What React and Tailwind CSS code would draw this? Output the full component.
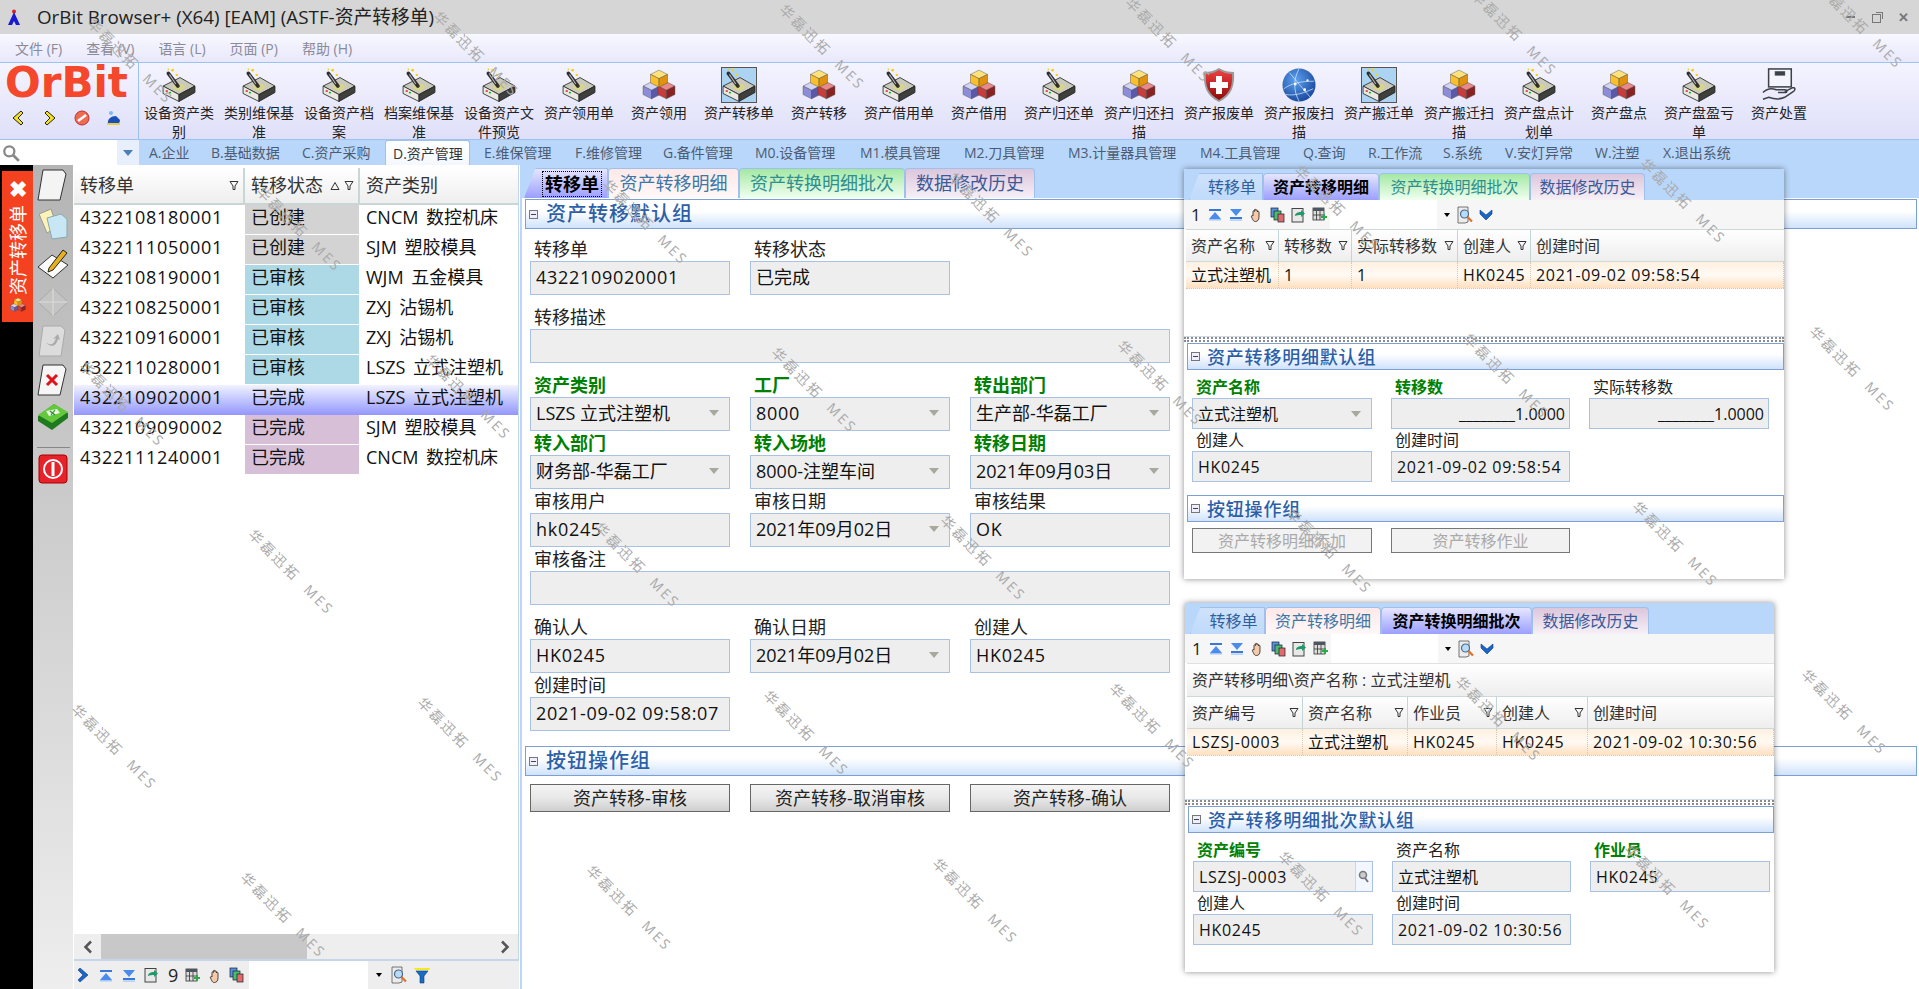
import React from 'react'

const Machine = ({ s = 34 }) => (
  <svg width={s} height={s} viewBox="0 0 32 32">
    <polygon points="1,17 17,9 31,17 16,25" fill="#c9c9bd" stroke="#2c2c2c" strokeWidth=".8" />
    <polygon points="1,17 16,25 16,31.500 1,24" fill="#e9e9e2" stroke="#2c2c2c" strokeWidth=".8" />
    <polygon points="16,25 31,17 31,23 16,31.500" fill="#3f3f3c" stroke="#222" strokeWidth=".8" />
    <ellipse cx="16" cy="18" rx="5.500" ry="3.200" fill="#d8d488" />
    <line x1="15" y1="17" x2="6" y2="5" stroke="#2e2e2e" strokeWidth="3.400" strokeLinecap="round" />
    <line x1="13" y1="15" x2="7" y2="6" stroke="#b8b8b8" strokeWidth="1" />
    <circle cx="10" cy="2" r="1.400" fill="#f4d21f" />
    <circle cx="14" cy="6.500" r="1.200" fill="#f4d21f" />
    <circle cx="6" cy="1.200" r=".8" fill="#e8c820" />
    <rect x="3.500" y="21" width="2" height="1.400" fill="#d22" />
    <rect x="6.500" y="22.500" width="2" height="1.400" fill="#2a2" />
  </svg>
)

const Cube = ({ x, y, r, top, left, right }) => (
  <g stroke="#444" strokeWidth=".4">
    <polygon points={`${x},${y - r} ${x + r},${y - r / 2} ${x},${y} ${x - r},${y - r / 2}`} fill={top} />
    <polygon points={`${x - r},${y - r / 2} ${x},${y} ${x},${y + r} ${x - r},${y + r / 2}`} fill={left} />
    <polygon points={`${x + r},${y - r / 2} ${x},${y} ${x},${y + r} ${x + r},${y + r / 2}`} fill={right} />
  </g>
)

const Cubes = ({ s = 34 }) => (
  <svg width={s} height={s} viewBox="0 0 32 32">
    <Cube x={9} y={21} r={8} top="#d4d4f4" left="#8c8cd8" right="#5a5aa8" />
    <Cube x={23} y={21} r={8} top="#e88a8a" left="#c83c3c" right="#8a2222" />
    <Cube x={16} y={10} r={8} top="#ffe27a" left="#fbc02a" right="#e2930e" />
  </svg>
)

const Shield = () => (
  <svg width="34" height="36" viewBox="0 0 34 36">
    <defs>
      <linearGradient id="shieldRed" x1="0" y1="0" x2="0" y2="1">
        <stop offset="0" stopColor="#f04040" />
        <stop offset="1" stopColor="#8c0a0a" />
      </linearGradient>
    </defs>
    <path d="M17 1 C22 4 27 5 32 5 C33 18 30 29 17 35 C4 29 1 18 2 5 C7 5 12 4 17 1Z" fill="#9a9a9a" />
    <path d="M17 3 C22 6 26 7 30 7 C31 18 28 27 17 33 C6 27 3 18 4 7 C8 7 12 6 17 3Z" fill="url(#shieldRed)" />
    <path d="M14 9h6v6h6v6h-6v6h-6v-6H8v-6h6z" fill="#fff" />
  </svg>
)

const Globe = () => (
  <svg width="36" height="36" viewBox="0 0 36 36">
    <defs>
      <radialGradient id="globeBlue" cx=".4" cy=".35" r=".75">
        <stop offset="0" stopColor="#5ea2ee" />
        <stop offset="1" stopColor="#123f96" />
      </radialGradient>
    </defs>
    <circle cx="18" cy="18" r="17.500" fill="url(#globeBlue)" />
    <g fill="none" stroke="#cfe4ff" strokeWidth=".8">
      <path d="M2 22 C10 16 20 14 34 14" />
      <path d="M8 5 C14 12 22 22 30 31" />
      <path d="M18 1 C12 12 12 24 18 35" />
      <path d="M4 28 C14 30 24 26 33 22" />
    </g>
    <circle cx="14" cy="17" r="1.500" fill="#fff" />
    <circle cx="24" cy="23" r="1.500" fill="#fff" />
    <circle cx="27" cy="13" r="1.200" fill="#fff" />
  </svg>
)

const HandBox = () => (
  <svg width="36" height="36" viewBox="0 0 36 36" fill="none" stroke="#3c4248">
    <rect x="7" y="1" width="24" height="19" strokeWidth="1.600" fill="#f4f4fc" />
    <rect x="14" y="4" width="10" height="3.500" fill="#3c4248" />
    <path d="M1 26 C5 22 10 21 15 23 L24 23 C27 23 27 26 24 26 L17 26" strokeWidth="1.600" />
    <path d="M24 25 L32 21 C35 20 36 23 33 25 L24 31 C20 33 13 33 7 31 L1 33" strokeWidth="1.600" />
  </svg>
)

const bigIcons = { m: <Machine />, c: <Cubes />, s: <Shield />, g: <Globe />, h: <HandBox /> }

const toolItems = [
  ['设备资产类别', 'm'], ['类别维保基准', 'm'], ['设备资产档案', 'm'], ['档案维保基准', 'm'],
  ['设备资产文件预览', 'm'], ['资产领用单', 'm'], ['资产领用', 'c'], ['资产转移单', 'm', true],
  ['资产转移', 'c'], ['资产借用单', 'm'], ['资产借用', 'c'], ['资产归还单', 'm'],
  ['资产归还扫描', 'c'], ['资产报废单', 's'], ['资产报废扫描', 'g'], ['资产搬迁单', 'm', true],
  ['资产搬迁扫描', 'c'], ['资产盘点计划单', 'm'], ['资产盘点', 'c'], ['资产盘盈亏单', 'm'], ['资产处置', 'h'],
]

// width = distance from this label's start to the next one
const navTabs = [
  ['A.企业', 62], ['B.基础数据', 91], ['C.资产采购', 90], ['D.资产管理', 92, true], ['E.维保管理', 91],
  ['F.维修管理', 88], ['G.备件管理', 92], ['M0.设备管理', 105], ['M1.模具管理', 104], ['M2.刀具管理', 104],
  ['M3.计量器具管理', 132], ['M4.工具管理', 103], ['Q.查询', 65], ['R.工作流', 75], ['S.系统', 62],
  ['V.安灯异常', 90], ['W.注塑', 68], ['X.退出系统', 90],
]

const rows = [
  ['4322108180001', '已创建', 'bg-[#d3d3d3]', 'CNCM 数控机床'],
  ['4322111050001', '已创建', 'bg-[#d3d3d3]', 'SJM 塑胶模具'],
  ['4322108190001', '已审核', 'bg-[#add8e6]', 'WJM 五金模具'],
  ['4322108250001', '已审核', 'bg-[#add8e6]', 'ZXJ 沾锡机'],
  ['4322109160001', '已审核', 'bg-[#add8e6]', 'ZXJ 沾锡机'],
  ['4322110280001', '已审核', 'bg-[#add8e6]', 'LSZS 立式注塑机'],
  ['4322109020001', '已完成', '', 'LSZS 立式注塑机', true],
  ['4322109090002', '已完成', 'bg-[#d8bfd8]', 'SJM 塑胶模具'],
  ['4322111240001', '已完成', 'bg-[#d8bfd8]', 'CNCM 数控机床'],
]

const Funnel = () => (
  <svg width="10" height="11" viewBox="0 0 10 11" fill="none" stroke="#333" className="shrink-0">
    <path d="M1 1.500h8L6 6v3.500H4V6z" strokeWidth="1" />
  </svg>
)

const SortUp = () => (
  <svg width="10" height="10" viewBox="0 0 10 10" fill="none" stroke="#333" className="shrink-0">
    <path d="M5 1.500L9 8.500H1z" strokeWidth="1" />
  </svg>
)

const BarUp = () => (
  <svg width="14" height="13" viewBox="0 0 14 13">
    <rect x="1" y="1" width="12" height="2" fill="#3a78d8" />
    <path d="M7 4l6 7H1z" fill="#4a8cec" />
    <rect x="1" y="11" width="12" height="1.500" fill="#a6c8f4" />
  </svg>
)

const BarDown = () => (
  <svg width="14" height="13" viewBox="0 0 14 13">
    <path d="M1 1h12L7 8z" fill="#4a8cec" />
    <rect x="1" y="9" width="12" height="2" fill="#3a78d8" />
    <rect x="1" y="11.500" width="12" height="1.200" fill="#a6c8f4" />
  </svg>
)

const Hand = () => (
  <svg width="13" height="15" viewBox="0 0 13 15">
    <path d="M3 8V4.500c0-1 1.400-1 1.400 0V3c0-1 1.500-1 1.500 0v.6c0-1 1.500-1 1.500 0V5c0-1 1.600-1 1.600 0v5c0 3-1.600 4.500-3.600 4.500S3.200 13.500 1.500 10c-.6-1.200.7-2 1.500-1z" fill="#f6c9a8" stroke="#222" strokeWidth=".8" />
  </svg>
)

const Copies = () => (
  <svg width="15" height="16" viewBox="0 0 15 16">
    <rect x="1" y="1" width="7" height="9" fill="#5a90e0" stroke="#123" strokeWidth=".7" />
    <rect x="4" y="4" width="7" height="9" fill="#4dbb6a" stroke="#123" strokeWidth=".7" />
    <rect x="8" y="7" width="6" height="8" fill="#e46a6a" stroke="#123" strokeWidth=".7" />
  </svg>
)

const Export = () => (
  <svg width="16" height="16" viewBox="0 0 16 16">
    <rect x="1" y="1.500" width="11" height="13.500" fill="#e8e8e8" stroke="#444" strokeWidth="1" />
    <path d="M4 9c0-3 3-4 6-4V3l4 3.500-4 3.500V8c-2 0-4 0-6 1z" fill="#1f9a6a" />
  </svg>
)

const Columns = () => (
  <svg width="16" height="15" viewBox="0 0 16 15">
    <rect x="1" y="1" width="11" height="12" fill="#ddd" stroke="#333" strokeWidth=".8" />
    <rect x="1" y="1" width="11" height="3" fill="#4d5560" />
    <path d="M4.500 4v9M8 4v9M1 8h11" stroke="#333" strokeWidth=".8" />
    <path d="M12 7v6M9 10h6" stroke="#2da84a" strokeWidth="2" />
  </svg>
)

const Magnifier = () => (
  <svg width="17" height="18" viewBox="0 0 17 18">
    <path d="M1 1h10v15l-3 1H1z" fill="#ececec" stroke="#555" strokeWidth=".8" />
    <circle cx="7.500" cy="8" r="4" fill="#b8dcf8" stroke="#4a6a8a" strokeWidth="1.200" />
    <path d="M10.500 11l4.500 4.500" stroke="#e0702a" strokeWidth="2.200" />
  </svg>
)

const Chevrons = () => (
  <svg width="14" height="14" viewBox="0 0 14 14">
    <path d="M1 2l6 5 6-5v4l-6 6-6-6z" fill="#1a66c8" stroke="#0c3c80" strokeWidth=".6" />
  </svg>
)

const ComboArrow = () => (
  <span className="ml-auto mr-[10px] size-0 border-x-[5px] border-t-[6px] border-x-transparent border-t-[#a8a89c]" />
)

const DropArrow = () => (
  <span className="size-0 border-x-[3px] border-t-[4px] border-x-transparent border-t-black" />
)

const MiniBar = ({ count }) => (
  <div className="h-[29px] bg-[#f6f6f6] flex items-center shrink-0">
    <span className="ml-[7px] w-[13px] text-[17px]">{count}</span>
    <div className="flex items-center">
      {[<BarUp key="a" />, <BarDown key="b" />, <Hand key="c" />, <Copies key="d" />, <Export key="e" />, <Columns key="f" />].map((icon, i) => (
        <span key={i} className="w-[21px] flex justify-center">{icon}</span>
      ))}
    </div>
    <div className="w-[107px] h-full bg-white" />
    <div className="w-[20px] flex justify-center"><DropArrow /></div>
    <Magnifier />
    <span className="ml-[5px]"><Chevrons /></span>
  </div>
)

// latin values run wider in the picture than the cjk ones
const valueCls = v => (/[\u4e00-\u9fff]/.test(v) ? '' : 'tracking-[0.7px]')

const Field = ({ label, req, value, combo, lookup, small, right, className }) => (
  <div className={className}>
    <div className={small
      ? `h-[22px] leading-[22px] pl-[4px] text-[16px] ${req ? 'font-bold text-[#008000]' : 'text-[#222]'}`
      : `h-[24px] leading-[24px] pl-[4px] text-[18px] ${req ? 'font-bold text-[#008000]' : 'text-[#222]'}`}>{label}</div>
    <div className={`${small ? 'h-[31px] text-[16px]' : 'h-[34px] pb-[2px] text-[18px]'} bg-[#eeeeee] border border-[#a9c1e2] flex items-center pl-[5px] text-[#111] whitespace-nowrap overflow-hidden`}>
      {right ? <span className="ml-auto pr-[4px]">{value}</span> : <span className={valueCls(value)}>{value}</span>}
      {combo && <ComboArrow />}
      {lookup && (
        <span className="ml-auto w-[17px] h-full bg-[#f2f7ff] border-l border-[#c6d8ee] flex items-center justify-center">
          <svg width="12" height="14" viewBox="0 0 12 14" fill="none">
            <circle cx="5" cy="5" r="3.500" stroke="#777" strokeWidth="1.500" fill="#ccc" />
            <path d="M7 8l3 4" stroke="#777" strokeWidth="2" />
          </svg>
        </span>
      )}
    </div>
  </div>
)

const GroupHeader = ({ title, small }) => (
  <div className={`${small ? 'h-[27px] text-[18px] pl-[3px] ml-[3px] gap-[7px] tracking-[0.8px]' : 'h-[30px] text-[20px] pl-[3px] gap-[8px] tracking-[1px]'} border border-[#7c9fd6] bg-gradient-to-b from-white from-40% to-[#cfe2fb] flex items-center text-[#2c5fa8] font-medium shrink-0`}>
    <span className="w-[9px] h-[9px] border border-[#777] flex items-center justify-center bg-[#eef]">
      <span className="w-[5px] h-px bg-[#444]" />
    </span>
    <span className="leading-none">{title}</span>
  </div>
)

const tabStyles = [
  { idle: 'from-[#cfe2fb] to-[#bfdafb] text-[#2f5f9f]', name: '转移单', first: true },
  { idle: 'from-[#ffe8e8] to-[#fff8f8] text-[#3a78a8]', name: '资产转移明细' },
  { idle: 'from-[#a4e8a4] to-[#f0fff0] text-[#2f8f8f]', name: '资产转换明细批次' },
  { idle: 'from-[#dcc6dc] to-[#f6f0f6] text-[#3a5a9a]', name: '数据修改历史' },
]

const Tabs = ({ active, widths, small }) => (
  <div className={`${small ? 'h-[31px] pl-[5px] text-[16px]' : 'h-[33px] pl-[2px] pt-[3px] text-[18px]'} bg-[#b9d7fb] flex items-end shrink-0`}>
    {tabStyles.map((t, i) => (
      <div
        key={t.name}
        style={{ width: widths[i] }}
        className={`${small ? 'h-[27px]' : 'h-[30px]'} ${t.first ? '[clip-path:polygon(14%_0,100%_0,100%_100%,0_100%)] pl-[12px]' : 'rounded-t-[4px]'} border border-b-0 border-[#9fc0ea] flex items-center justify-center shrink-0 bg-gradient-to-b ${i === active ? 'from-[#e6e6ff] to-[#9c9eff] text-black font-bold' : t.idle}`}
      >
        <span className={i === active && !small ? 'border border-dotted border-black px-[2px] leading-[24px]' : ''}>{t.name}</span>
      </div>
    ))}
  </div>
)

const FloatHead = ({ cols }) => (
  <div className="h-[33px] flex bg-gradient-to-b from-white to-[#eeeeee] border-y border-[#cdd9d9] shrink-0 ml-[2px]">
    {cols.map(([name, w, noFilter]) => (
      <div key={name} style={{ width: w }} className={`flex items-center pl-[5px] pr-[3px] border-r border-[#c5d5d5] text-[16px] text-[#333] ${noFilter ? 'flex-1 border-r-0' : 'shrink-0'}`}>
        <span className="whitespace-nowrap">{name}</span>
        {!noFilter && <span className="ml-auto"><Funnel /></span>}
      </div>
    ))}
  </div>
)

const FloatRow = ({ cols }) => (
  <div className="h-[27px] flex bg-gradient-to-b from-[#fff0e0] via-[#fffaf4] to-[#ffdfbe] border-b border-dotted border-[#d8c8b0] shrink-0 ml-[2px]">
    {cols.map(([text, w], i) => (
      <div key={i} style={{ width: w }} className={`flex items-center pl-[5px] text-[16px] text-[#111] whitespace-nowrap border-r border-dotted border-[#d8c8b0] shrink-0 ${valueCls(text)}`}>{text}</div>
    ))}
  </div>
)

const Splitter = () => (
  <div className="h-[5px] shrink-0 border-y-2 border-dotted border-[#8a8a8a] mb-[1px]" />
)

// watermark grid, read off the picture
const marks = []
for (let i = -2; i < 8; i++) {
  for (let j = -3; j < 7; j++) {
    const x = 79 + i * 346 + j * 177
    const y = 702 - i * 7 - j * 175
    if (x > -130 && x < 1919 && y > -110 && y < 989) marks.push([x, y])
  }
}

const stripIcons = [
  <svg key="a" width="32" height="32" viewBox="0 0 32 32"><path d="M6 1h20l3 4-6 26H1z" fill="#f4f4f4" stroke="#333" /></svg>,
  <svg key="b" width="32" height="32" viewBox="0 0 32 32"><path d="M2 6l12-5 6 18-10 6z" fill="#fbf2b8" stroke="#999" /><path d="M10 10l14-4 6 5v18l-15 2z" fill="#c8e6f4" stroke="#8aa" /></svg>,
  <svg key="c" width="32" height="32" viewBox="0 0 32 32"><path d="M1 20L15 8l16 10-15 13z" fill="#fbfbfb" stroke="#333" /><path d="M12 21L26 3l4 3-14 17-5 2z" fill="#e9b01e" stroke="#222" /></svg>,
  <svg key="d" width="32" height="32" viewBox="0 0 32 32"><path d="M1 16L16 2l15 14-15 14z" fill="#c4c4c4" stroke="#aaa" /><path d="M16 2v28M1 16h30" stroke="#ddd" /></svg>,
  <svg key="e" width="32" height="32" viewBox="0 0 32 32"><path d="M6 1h18l4 4-4 26H2z" fill="#dcdcdc" stroke="#aaa" /><path d="M9 17c4 4 8 3 10-4l-3 1 5-5 2 6-2-1c-2 8-8 9-12 3z" fill="#aaa" /></svg>,
  <svg key="f" width="32" height="32" viewBox="0 0 32 32"><path d="M6 1h20l3 4-6 26H1z" fill="#f6f6f6" stroke="#333" /><path d="M10 11l10 10M20 11L10 21" stroke="#e0151b" strokeWidth="3" /></svg>,
  <svg key="g" width="32" height="28" viewBox="0 0 32 28"><path d="M1 13L17 1l14 9v5L15 27 1 18z" fill="#1f7a1f" /><path d="M1 12L17 1l14 8-16 11z" fill="#63c83c" /><path d="M9 8l11-2 3 4-11 3z" fill="#e6f6e0" /><path d="M13 8l5 4M18 7l-4 5" stroke="#2a8a2a" strokeWidth="1.200" /></svg>,
]

export default function App() {
  return (
    <div className="relative w-[1919px] h-[989px] overflow-hidden bg-white flex flex-col text-[#222] font-['Open_Sans','Noto_Sans_CJK_SC',sans-serif]">
      {/* title bar */}
      <div className="h-[34px] bg-[#d6d6d6] flex items-center shrink-0 pl-[7px]">
        <svg width="14" height="17" viewBox="0 0 14 17">
          <circle cx="7" cy="2.500" r="2" fill="#e02020" />
          <path d="M7 3L13 16H9L7 12 5 16H1z" fill="#1a1ad0" />
        </svg>
        <span className="ml-[16px] text-[18.8px] text-[#222] whitespace-nowrap">OrBit Browser+ (X64) [EAM] (ASTF-资产转移单)</span>
        <div className="ml-auto flex items-center gap-[17px] pr-[10px] text-[#777]">
          <span className="w-[9px] h-[2px] bg-[#777]" />
          <span className="relative w-[9px] h-[9px] border border-[#777] mt-[2px]">
            <span className="absolute -top-[3px] -right-[3px] w-[7px] h-[7px] border-t border-r border-[#777]" />
          </span>
          <span className="text-[13px] font-bold leading-none">✕</span>
        </div>
      </div>

      {/* menu */}
      <div className="h-[28px] bg-gradient-to-b from-[#f8f8ff] to-[#e8e8fb] flex items-center gap-[24px] pl-[15px] text-[14px] text-[#8a8a9a] shrink-0">
        <span>文件 (F)</span>
        <span>查看 (V)</span>
        <span>语言 (L)</span>
        <span>页面 (P)</span>
        <span>帮助 (H)</span>
      </div>

      {/* toolbar */}
      <div className="h-[78px] border-y border-[#9ec2ee] bg-gradient-to-b from-[#f4f4ff] to-[#dfdff9] flex shrink-0">
        <div className="w-[139px] border-r border-[#9ec2ee] shrink-0">
          <div className="h-[40px] pl-[5px] pt-[1px] text-[42px] leading-[38px] font-bold text-[#f4472b] font-['DejaVu_Sans',sans-serif]">OrBit</div>
          <div className="flex items-center gap-[16px] pl-[10px] pt-[7px]">
            <svg width="16" height="16" viewBox="0 0 16 16"><path d="M11 1L3 8l8 7 2-2-5-5 5-5z" fill="#f6e21a" stroke="#222" /></svg>
            <svg width="16" height="16" viewBox="0 0 16 16"><path d="M5 1l8 7-8 7-2-2 5-5-5-5z" fill="#f6e21a" stroke="#222" /></svg>
            <svg width="16" height="16" viewBox="0 0 16 16"><circle cx="8" cy="8" r="7" fill="#ee6a50" stroke="#b33" /><path d="M4 11l8-6" stroke="#fff" strokeWidth="2.500" /></svg>
            <svg width="16" height="16" viewBox="0 0 16 16"><path d="M2 14c-1-5 3-8 8-8l4 4c0 3-2 4-4 4z" fill="#1b4fb8" /><rect x="1" y="13" width="13" height="2" fill="#e8d040" /><circle cx="5" cy="3" r="2" fill="#7bbcf0" /></svg>
          </div>
        </div>
        {toolItems.map(([label, icon, sel]) => (
          <div key={label} className="w-[80px] shrink-0 flex flex-col items-center pt-[4px]">
            <div className={`size-[36px] flex items-center justify-center border ${sel ? 'bg-[#acd3f1] border-[#555]' : 'border-transparent'}`}>
              {bigIcons[icon]}
            </div>
            <div className="w-[72px] text-center text-[14px] leading-[19px] text-[#222]">{label}</div>
          </div>
        ))}
      </div>

      {/* module tabs */}
      <div className="h-[25px] bg-[#b9d7fb] flex items-stretch shrink-0 text-[14px] text-[#4d5c72]">
        <div className="w-[117px] bg-white flex items-center pl-[2px] shrink-0">
          <svg width="18" height="18" viewBox="0 0 16 16" fill="none">
            <circle cx="6.500" cy="6.500" r="4.500" stroke="#888" strokeWidth="2" />
            <path d="M10 10l5 5" stroke="#888" strokeWidth="2.500" />
          </svg>
        </div>
        <div className="w-[22px] bg-[#e6effb] flex items-center justify-center shrink-0">
          <span className="size-0 border-x-[5px] border-t-[6px] border-x-transparent border-t-[#4d7db8]" />
        </div>
        <div className="flex pl-[10px]">
          {navTabs.map(([label, w, on]) => (
            on ? (
              <div key={label} className="-ml-[7px] mr-[14px] w-[85px] pl-[7px] flex items-center whitespace-nowrap shrink-0 bg-gradient-to-b from-white to-[#f4f8fe] border-x border-t border-[#9ec2ee] rounded-t-[3px] text-[#333]">{label}</div>
            ) : (
              <div key={label} style={{ width: w }} className="flex items-center whitespace-nowrap shrink-0">{label}</div>
            )
          ))}
        </div>
      </div>

      {/* body */}
      <div className="flex-1 flex min-h-0">
        {/* black rail */}
        <div className="w-[33px] bg-black pl-[2px] pt-[6px] shrink-0">
          <div className="h-[151px] bg-[#f4411f] flex flex-col items-center text-white">
            <span className="text-[22px] font-bold leading-[34px]">✖</span>
            <span className="text-[18px] leading-[20px] [writing-mode:vertical-rl] [text-orientation:sideways] rotate-180 whitespace-nowrap">资产转移单</span>
            <span className="mt-[2px]"><Cubes s={16} /></span>
          </div>
        </div>

        {/* grey icon strip */}
        <div className="w-[40px] shrink-0 bg-gradient-to-b from-[#b4b4b4] to-[#eeeeee] flex flex-col items-center pt-[4px] gap-[7px]">
          {stripIcons}
          <div className="w-[33px] h-px bg-[#888] mt-[9px]" />
          <svg width="30" height="30" viewBox="0 0 30 30" className="-mt-[1px]">
            <rect x="1" y="1" width="28" height="28" rx="3" fill="#e8222a" stroke="#a00" />
            <circle cx="15" cy="15" r="9" fill="none" stroke="#fff" strokeWidth="2" />
            <path d="M15 8v14" stroke="#fff" strokeWidth="3" />
          </svg>
        </div>

        {/* list */}
        <div className="w-[445px] shrink-0 ml-[1px] flex flex-col border-r border-[#c5d6ea] pt-[3px]">
          <div className="h-[37px] flex bg-gradient-to-b from-white to-[#eeeeee] border-b-2 border-[#c9d6d6] text-[18px] text-[#333] shrink-0">
            <div className="w-[171px] flex items-center pl-[6px] pr-[4px] border-r-2 border-[#c9d6d6]"><span>转移单</span><span className="ml-auto"><Funnel /></span></div>
            <div className="w-[115px] flex items-center pl-[6px] pr-[4px] gap-[4px] border-r-2 border-[#c9d6d6]"><span>转移状态</span><span className="ml-auto"><SortUp /></span><Funnel /></div>
            <div className="flex-1 flex items-center pl-[6px]">资产类别</div>
          </div>
          <div className="flex-1">
            {rows.map(([no, st, cls, cat, sel]) => (
              <div key={no} className={`h-[30px] flex text-[18px] text-[#111] ${sel ? 'bg-gradient-to-b from-[#f2f2ff] to-[#9496fb]' : ''}`}>
                <div className="w-[171px] flex items-center pl-[6px] pb-[5px] tracking-[0.7px]">{no}</div>
                <div className={`w-[114px] mb-px flex items-center pl-[6px] pb-[4px] ${cls}`}>{st}</div>
                <div className="flex-1 flex items-center pl-[7px] pb-[5px] whitespace-nowrap [word-spacing:3px]">{cat}</div>
              </div>
            ))}
          </div>
          <div className="h-[25px] bg-[#eeeeee] flex items-center shrink-0">
            <span className="w-[27px] flex justify-center text-[#555]">
              <svg width="10" height="14" viewBox="0 0 10 14" fill="none"><path d="M8 1.500L2.500 7 8 12.500" stroke="#555" strokeWidth="2.500" /></svg>
            </span>
            <div className="w-[206px] h-full bg-[#c8c8c8]" />
            <span className="ml-auto w-[27px] flex justify-center">
              <svg width="10" height="14" viewBox="0 0 10 14" fill="none"><path d="M2 1.500L7.500 7 2 12.500" stroke="#555" strokeWidth="2.500" /></svg>
            </span>
          </div>
          <div className="h-[30px] bg-[#eeeeee] border-t-2 border-[#c5d6ea] flex items-center shrink-0 -mr-[1px]">
            <span className="ml-[3px]">
              <svg width="13" height="16" viewBox="0 0 13 16"><path d="M3 1l8 7-8 7-2-2 5-5-5-5z" fill="#1a66c8" stroke="#0c3c80" strokeWidth=".6" /></svg>
            </span>
            <span className="ml-[9px]"><BarUp /></span>
            <span className="ml-[9px]"><BarDown /></span>
            <span className="ml-[8px]"><Export /></span>
            <span className="ml-[8px] text-[18px] text-[#222] w-[12px]">9</span>
            <span className="ml-[5px]"><Columns /></span>
            <span className="ml-[8px]"><Hand /></span>
            <span className="ml-[7px]"><Copies /></span>
            <div className="ml-[5px] w-[119px] h-full bg-white" />
            <div className="w-[22px] flex justify-center"><DropArrow /></div>
            <span className="ml-[1px]"><Magnifier /></span>
            <span className="ml-[6px]">
              <svg width="16" height="17" viewBox="0 0 16 17"><path d="M0 1h16l-1 2H1z" fill="#f6e81a" /><path d="M2 4h12l-4 5v7H6V9z" fill="#1a6cc0" stroke="#0c3c80" strokeWidth=".6" /></svg>
            </span>
          </div>
        </div>

        {/* main form */}
        <div className="flex-1 min-w-0 ml-px flex flex-col border-l-2 border-[#b9d7fb]">
          <Tabs active={0} widths={[84, 131, 166, 130]} />
          <div className="flex-1 bg-white pl-[3px] pr-[2px] pt-[1px] flex flex-col">
            <GroupHeader title="资产转移默认组" />
            <div className="grid grid-cols-[200px_200px_200px] gap-x-[20px] px-[5px] pt-[8px]">
              <Field label="转移单" value="4322109020001" />
              <Field label="转移状态" value="已完成" />
              <div />
              <Field label="转移描述" value="" className="col-span-3 mt-[10px]" />
              <Field label="资产类别" req value="LSZS 立式注塑机" combo className="mt-[10px]" />
              <Field label="工厂" req value="8000" combo className="mt-[10px]" />
              <Field label="转出部门" req value="生产部-华磊工厂" combo className="mt-[10px]" />
              <Field label="转入部门" req value="财务部-华磊工厂" combo />
              <Field label="转入场地" req value="8000-注塑车间" combo />
              <Field label="转移日期" req value="2021年09月03日" combo />
              <Field label="审核用户" value="hk0245" />
              <Field label="审核日期" value="2021年09月02日" combo />
              <Field label="审核结果" value="OK" />
              <Field label="审核备注" value="" className="col-span-3" />
              <Field label="确认人" value="HK0245" className="mt-[10px]" />
              <Field label="确认日期" value="2021年09月02日" combo className="mt-[10px]" />
              <Field label="创建人" value="HK0245" className="mt-[10px]" />
              <Field label="创建时间" value="2021-09-02 09:58:07" />
            </div>
            <div className="mt-[15px]"><GroupHeader title="按钮操作组" /></div>
            <div className="grid grid-cols-[200px_200px_200px] gap-x-[20px] px-[5px] pt-[8px] text-[18px]">
              {['资产转移-审核', '资产转移-取消审核', '资产转移-确认'].map(b => (
                <div key={b} className="h-[28px] border border-[#666] flex items-center justify-center bg-gradient-to-b from-[#f4f4f4] via-[#e8e8e8] to-[#cfcfcf] text-[#222]">{b}</div>
              ))}
            </div>
          </div>
        </div>
      </div>

      {/* floating detail window */}
      <div className="absolute left-[1184px] top-[169px] w-[600px] h-[410px] bg-white shadow-[0_0_6px_rgba(0,0,0,0.45)] flex flex-col">
        <Tabs small active={1} widths={[74, 116, 151, 115]} />
        <MiniBar count="1" />
        <FloatHead cols={[['资产名称', 93], ['转移数', 73], ['实际转移数', 106], ['创建人', 73], ['创建时间', 250, true]]} />
        <FloatRow cols={[['立式注塑机', 93], ['1', 73], ['1', 106], ['HK0245', 73], ['2021-09-02 09:58:54', 253]]} />
        <div className="h-[48px] border-b border-[#d0dcec] shrink-0" />
        <Splitter />
        <GroupHeader small title="资产转移明细默认组" />
        <div className="grid grid-cols-[180px_179px_180px] gap-x-[19px] pl-[8px] pt-[6px]">
          <Field small label="资产名称" req value="立式注塑机" combo />
          <Field small label="转移数" req value="________1.0000" right />
          <Field small label="实际转移数" value="________1.0000" right />
          <Field small label="创建人" value="HK0245" />
          <Field small label="创建时间" value="2021-09-02 09:58:54" />
        </div>
        <div className="mt-[13px]"><GroupHeader small title="按钮操作组" /></div>
        <div className="grid grid-cols-[180px_179px] gap-x-[19px] pl-[8px] pt-[6px] text-[16px]">
          {['资产转移明细添加', '资产转移作业'].map(b => (
            <div key={b} className="h-[25px] border border-[#777] bg-[#f2f2f2] flex items-center justify-center text-[#aaaaaa]">{b}</div>
          ))}
        </div>
      </div>

      {/* floating batch window */}
      <div className="absolute left-[1185px] top-[603px] w-[589px] h-[369px] bg-white shadow-[0_0_6px_rgba(0,0,0,0.45)] flex flex-col">
        <Tabs small active={2} widths={[75, 116, 151, 117]} />
        <MiniBar count="1" />
        <div className="h-[33px] ml-[2px] border-t border-[#e0e0e0] bg-gradient-to-b from-white to-[#eeeeee] flex items-center pl-[5px] text-[16px] text-[#333] shrink-0">资产转移明细\资产名称 : 立式注塑机</div>
        <FloatHead cols={[['资产编号', 116], ['资产名称', 105], ['作业员', 89], ['创建人', 91], ['创建时间', 186, true]]} />
        <FloatRow cols={[['LSZSJ-0003', 116], ['立式注塑机', 105], ['HK0245', 89], ['HK0245', 91], ['2021-09-02 10:30:56', 186]]} />
        <div className="h-[44px] border-b border-[#d0dcec] shrink-0" />
        <Splitter />
        <GroupHeader small title="资产转移明细批次默认组" />
        <div className="grid grid-cols-[180px_179px_180px] gap-x-[19px] pl-[8px] pt-[6px]">
          <Field small label="资产编号" req value="LSZSJ-0003" lookup />
          <Field small label="资产名称" value="立式注塑机" />
          <Field small label="作业员" req value="HK0245" />
          <Field small label="创建人" value="HK0245" />
          <Field small label="创建时间" value="2021-09-02 10:30:56" />
        </div>
      </div>

      {/* watermark layer */}
      <div className="absolute inset-0 pointer-events-none overflow-hidden">
        {marks.map(([x, y]) => (
          <span
            key={`${x}-${y}`}
            style={{ left: x, top: y }}
            className="absolute origin-top-left rotate-45 whitespace-nowrap text-[14px] leading-none tracking-[2.500px] text-[#aaaaaa]"
          >
            华磊迅拓&nbsp;&nbsp;MES
          </span>
        ))}
      </div>
    </div>
  )
}
